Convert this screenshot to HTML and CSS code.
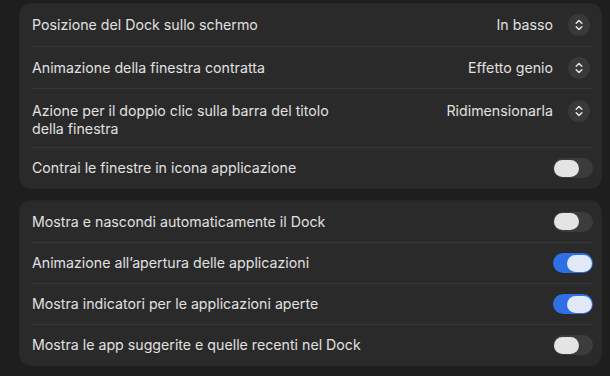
FILE: index.html
```html
<!DOCTYPE html>
<html lang="it">
<head>
<meta charset="utf-8">
<link rel="stylesheet" href="styles.css">
</head>
<body>
<div class="page">
  <section class="card">
    <div class="row row-popup">
      <span class="label">Posizione del Dock sullo schermo</span>
      <div class="popup"><span class="value">In basso</span><span class="stepper"><svg width="8" height="12" viewBox="0 0 8 12"><path d="M1.2 4.3 L4 1.5 L6.8 4.3 M1.2 7.7 L4 10.5 L6.8 7.7" fill="none" stroke="#e2e2e2" stroke-width="1.5" stroke-linecap="round" stroke-linejoin="round"/></svg></span></div>
    </div>
    <div class="row row-popup">
      <span class="label">Animazione della finestra contratta</span>
      <div class="popup"><span class="value">Effetto genio</span><span class="stepper"><svg width="8" height="12" viewBox="0 0 8 12"><path d="M1.2 4.3 L4 1.5 L6.8 4.3 M1.2 7.7 L4 10.5 L6.8 7.7" fill="none" stroke="#e2e2e2" stroke-width="1.5" stroke-linecap="round" stroke-linejoin="round"/></svg></span></div>
    </div>
    <div class="row row-tall">
      <span class="label label-multi">Azione per il doppio clic sulla barra del titolo<br>della finestra</span>
      <div class="popup"><span class="value">Ridimensionarla</span><span class="stepper"><svg width="8" height="12" viewBox="0 0 8 12"><path d="M1.2 4.3 L4 1.5 L6.8 4.3 M1.2 7.7 L4 10.5 L6.8 7.7" fill="none" stroke="#e2e2e2" stroke-width="1.5" stroke-linecap="round" stroke-linejoin="round"/></svg></span></div>
    </div>
    <div class="row">
      <span class="label">Contrai le finestre in icona applicazione</span>
      <span class="toggle"><span class="knob"></span></span>
    </div>
  </section>
  <section class="card">
    <div class="row">
      <span class="label">Mostra e nascondi automaticamente il Dock</span>
      <span class="toggle"><span class="knob"></span></span>
    </div>
    <div class="row">
      <span class="label">Animazione all’apertura delle applicazioni</span>
      <span class="toggle on"><span class="knob"></span></span>
    </div>
    <div class="row">
      <span class="label">Mostra indicatori per le applicazioni aperte</span>
      <span class="toggle on"><span class="knob"></span></span>
    </div>
    <div class="row">
      <span class="label">Mostra le app suggerite e quelle recenti nel Dock</span>
      <span class="toggle"><span class="knob"></span></span>
    </div>
  </section>
</div>
</body>
</html>
```
FILE: styles.css
```css
html, body {
  margin: 0;
  padding: 0;
  background: #1e1e1e;
}
body {
  font-family: Inter, "Noto Sans", sans-serif;
  font-size: 14.2px;
  color: #e0e0e0;
  width: 610px;
  height: 376px;
  overflow: hidden;
}
.page {
  display: flex;
  flex-direction: column;
  gap: 13px;
  padding: 4px 9px 0 20px;
}
.card {
  background: #2a2a2a;
  border-radius: 10px;
  box-shadow: 0 0 0 1px #262626;
  display: flex;
  flex-direction: column;
}
.row {
  box-sizing: border-box;
  display: flex;
  align-items: center;
  justify-content: space-between;
  height: 41px;
  margin: 0 8px 0 12px;
  border-top: 1px solid #363636;
}
.row:first-child {
  border-top: none;
}
.row-popup {
  height: 42px;
}
.row-tall {
  height: 59px;
  align-items: flex-start;
  padding-top: 11px;
}
.label {
  line-height: 18px;
}
.label-multi {
  margin-top: 2px;
}
.popup {
  display: flex;
  align-items: center;
  gap: 15px;
  padding-right: 3px;
}
.value {
  line-height: 22px;
}
.stepper {
  width: 22px;
  height: 22px;
  border-radius: 50%;
  background: #393939;
  display: flex;
  align-items: center;
  justify-content: center;
}
.toggle {
  position: relative;
  width: 40px;
  height: 20px;
  border-radius: 10px;
  background: #3c3c3c;
  flex: none;
}
.knob {
  position: absolute;
  left: 1px;
  top: 1.5px;
  width: 25px;
  height: 17px;
  border-radius: 9px;
  background: #e4e4e4;
}
.toggle.on {
  background: #2f6fe4;
}
.toggle.on .knob {
  left: 14px;
  background: #e1e9f8;
}
```
